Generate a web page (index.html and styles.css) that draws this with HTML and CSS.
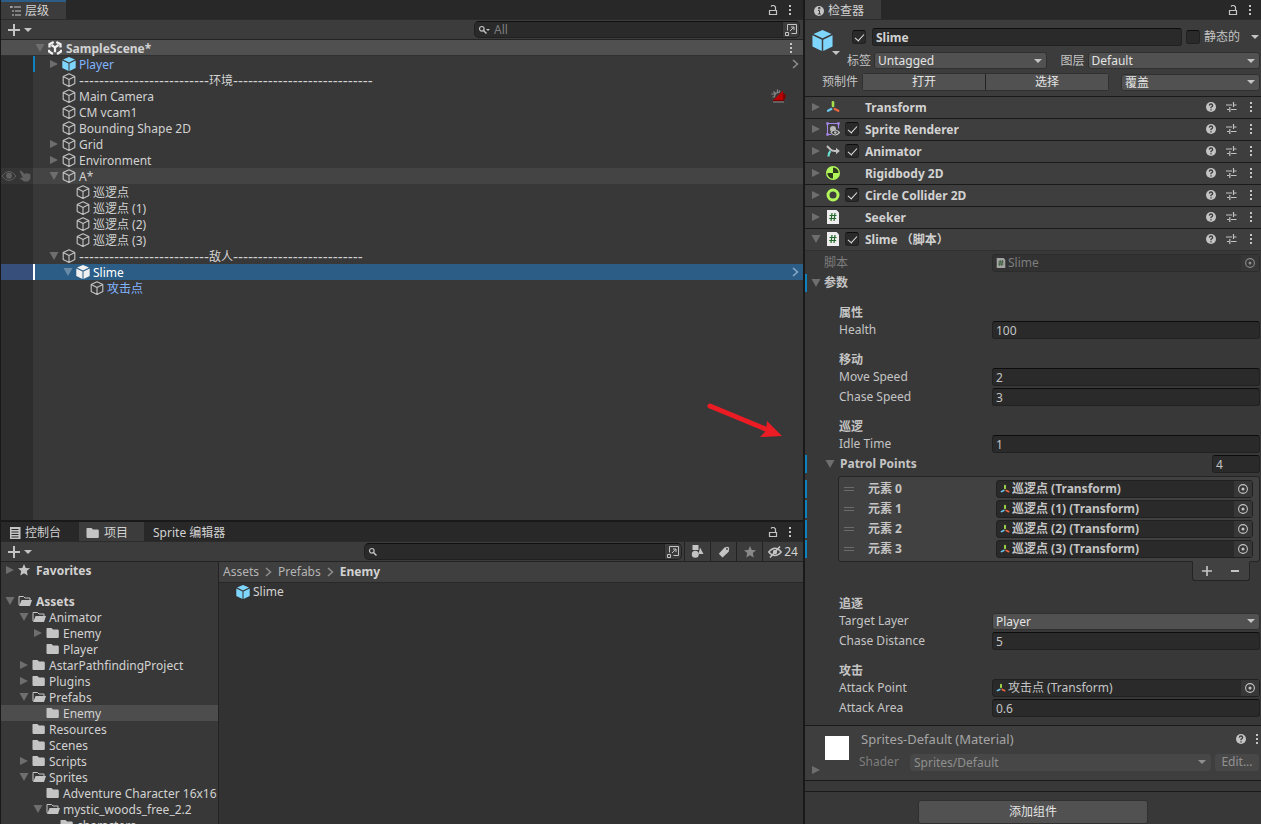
FILE: index.html
```html
<!DOCTYPE html>
<html lang="zh-CN">
<head>
<meta charset="utf-8">
<title>Unity Editor</title>
<link rel="stylesheet" href="styles.css">
</head>
<body>
<svg class="sprite" aria-hidden="true">
  <symbol id="right" viewBox="0 0 10 10"><path d="M1 1v8l8-4z" fill="currentColor"/></symbol>
  <symbol id="down" viewBox="0 0 10 10"><path d="M0.5 1h9l-4.500 8z" fill="currentColor"/></symbol>
  <symbol id="caret" viewBox="0 0 8 4"><path d="M0 0h8L4 4z" fill="currentColor"/></symbol>
  <symbol id="chevron" viewBox="0 0 7 10"><path d="M1 1l4.500 4L1 9" fill="none" stroke="currentColor" stroke-width="1.500"/></symbol>
  <symbol id="cube" viewBox="0 0 14 14"><path d="M7 .7l5.800 2.700v7L7 13.400 1.200 10.400v-7zM1.200 3.400L7 6.400l5.800-3M7 6.400v7" fill="none" stroke="currentColor" stroke-width="1.100" stroke-linejoin="round"/></symbol>
  <symbol id="solid" viewBox="0 0 14 14"><path d="M7 0l6 2.600-6 2.900-6-2.900zM.3 3.500l6.200 3V14L.3 11zM13.700 3.500l-6.200 3V14l6.200-3z" fill="currentColor"/></symbol>
  <symbol id="unity" viewBox="0 0 14 14"><path d="M5.700 1L1.500 3.200v3.300M8.300 1l4.200 2.200v3.300M1 8.800v1.700L5 13M13 8.800v1.700L9 13M3.500 4L7 6.400 10.500 4M7 6.400v4.800" fill="none" stroke="currentColor" stroke-width="2.300"/></symbol>
  <symbol id="dots" viewBox="0 0 4 12"><path d="M1 1h2v2H1zM1 5h2v2H1zM1 9h2v2H1z" fill="currentColor"/></symbol>
  <symbol id="lock" viewBox="0 0 10 12"><path d="M1.500 6.500h7v4h-7zM3 2.500l1-1h2l1.500 1.500v3" fill="none" stroke="currentColor" stroke-width="1.200"/></symbol>
  <symbol id="plus" viewBox="0 0 12 12"><path d="M6 0v12M0 6h12" stroke="currentColor" stroke-width="2"/></symbol>
  <symbol id="minus" viewBox="0 0 10 10"><path d="M1 5h8" stroke="currentColor" stroke-width="2"/></symbol>
  <symbol id="search" viewBox="0 0 10 10"><circle cx="3.800" cy="3.800" r="2.300" fill="none" stroke="currentColor" stroke-width="1.200"/><path d="M5.500 5.500l3 3" stroke="currentColor" stroke-width="1.500"/></symbol>
  <symbol id="popout" viewBox="0 0 12 12"><path d="M2.500 6.500v-6h9v9h-5M.5 8.500h3v3h-3zM5 7l4-4M6 3h3v3" fill="none" stroke="currentColor"/></symbol>
  <symbol id="list" viewBox="0 0 11 10"><path d="M1 0v2M0 1h3M4 1h7M2 5h2M5 5h6M2 9h2M5 9h6" stroke="currentColor"/></symbol>
  <symbol id="console" viewBox="0 0 11 12"><path d="M0 0h10.500v12H0z" fill="currentColor"/><path d="M1.500 2.500h7M1.500 5h7M1.500 7.500h7M1.500 10h7" stroke="#282828"/></symbol>
  <symbol id="folder" viewBox="0 0 14 12"><path d="M1 1h4.500l1.500 1.500h5l.8 1v6.800l-.8.700H1.200l-.7-.7V1.500z" fill="currentColor"/></symbol>
  <symbol id="folder-open" viewBox="0 0 14 12"><path d="M1 10V1.500h4.500L7 3h5v2" fill="none" stroke="currentColor"/><path d="M3.600 5H14l-2 6H1z" fill="currentColor"/></symbol>
  <symbol id="star" viewBox="0 0 12 12"><path d="M6 0l1.700 3.900 4.300.4-3.200 2.800.9 4.400L6 9.200l-3.700 2.300.9-4.400L0 4.300l4.300-.4z" fill="currentColor"/></symbol>
  <symbol id="eye" viewBox="0 0 14 10"><path d="M0 5Q7-4 14 5Q7 14 0 5z" fill="none" stroke="currentColor"/><circle cx="7" cy="4.800" r="3" fill="currentColor"/></symbol>
  <symbol id="eye-off" viewBox="0 0 14 12"><path d="M.7 6Q7-1.500 13.300 6Q7 13 .7 6z" fill="none" stroke="currentColor" stroke-width="1.300"/><circle cx="7" cy="6" r="2.200" fill="currentColor"/><path d="M2 11.500L12 .5" stroke="currentColor" stroke-width="1.600"/></symbol>
  <symbol id="hand" viewBox="0 0 12 12"><path d="M.5 1l1.500-.5L5.500 4l2-1 1 .7 1-.5 1 .8.800-.2V9L9 11.500H5L1 8.500l.5-1 2.500.5z" fill="currentColor"/></symbol>
  <symbol id="camera" viewBox="0 0 15 14"><path d="M.5 5h3M2.500 2.500l2 2M6.500 .5v3M1.500 8h2M9 1.500L8 3.500M3.500 8Q3.500 3.500 8 3.500" fill="none" stroke="#8a8a8a" stroke-width="1.200"/><path d="M2.500 11L12 1.500V11z" fill="#b80000"/><path d="M12 4l2.500 1.500v4L12 11z" fill="#800000"/><path d="M2 11.500h11" stroke="#700"/><path d="M2 13h11" stroke="#8a8a8a"/></symbol>
  <symbol id="info" viewBox="0 0 10 10"><circle cx="5" cy="5" r="5" fill="currentColor"/><path d="M4 4.500h1.500V8M3.800 8h3M4.500 1.500h1.500v1.300H4.500z" fill="none" stroke="#3c3c3c"/></symbol>
  <symbol id="help" viewBox="0 0 10 10"><circle cx="5" cy="5" r="5" fill="currentColor"/><path d="M3.300 3.600Q3.500 2 5 2T6.700 3.600Q6.700 4.600 5 5.300V6.300M5 7.200v1.300" fill="none" stroke="#3c3c3c" stroke-width="1.300"/></symbol>
  <symbol id="sliders" viewBox="0 0 11 10"><path d="M0 3h6M8 3h2.500M7.500 0v5M1 7.500h2M5 7.500h5.500M3.800 5v5" fill="none" stroke="currentColor" stroke-width="1.200"/></symbol>
  <symbol id="axes" viewBox="0 0 14 12"><path d="M7 5V1.200" stroke="#a5e04a" stroke-width="2.600" stroke-linecap="round"/><path d="M5.300 8L2 9.700" stroke="#6cc7ee" stroke-width="2.300" stroke-linecap="round"/><path d="M8.700 8l3.600 1.800" stroke="#ef6540" stroke-width="2.300" stroke-linecap="round"/></symbol>
  <symbol id="sprite-r" viewBox="0 0 14 14"><path d="M2 1.500h10.500v5M1.500 2v10.500h4" fill="none" stroke="#a486e8" stroke-width="1.100"/><path d="M.3.300h2.400v2.400H.3zM11.300.300h2.400v2.400h-2.400zM.3 11.300h2.400v2.400H.3z" fill="#a486e8"/><circle cx="7" cy="7" r="3" fill="#b8b8b8"/><path d="M5 10.500q4-5 8.500 0q-4.500 5-8.500 0z" fill="#383838" stroke="#c4c4c4" stroke-width="1.200"/><circle cx="9.300" cy="10.500" r="1.300" fill="#c4c4c4"/></symbol>
  <symbol id="animator" viewBox="0 0 14 12"><path d="M1 1l3.500 3.500Q6 6 9 6h3" fill="none" stroke="#c4c4c4" stroke-width="1.800"/><path d="M10 2.800L13.800 6 10 9.200z" fill="#c4c4c4"/><path d="M4.500 6q-2 2-2 5.500" fill="none" stroke="#6ee0d2" stroke-width="2.200"/></symbol>
  <symbol id="rigid" viewBox="0 0 14 14"><circle cx="7" cy="7" r="6.300" fill="#2d3a1c" stroke="#b0f55a" stroke-width="1.400"/><path d="M7 7V.7A6.300 6.300 0 0 0 .7 7zM7 7v6.300A6.300 6.300 0 0 0 13.300 7z" fill="#b0f55a"/></symbol>
  <symbol id="collider" viewBox="0 0 14 14"><circle cx="7" cy="7" r="5" fill="none" stroke="#b0f55a" stroke-width="3"/></symbol>
  <symbol id="script" viewBox="0 0 14 14"><path d="M1 0h9.500L13 2.500V14H1z" fill="#eee"/><path d="M6 3L5 11M9 3L8 11M3.500 5.500h7M3.200 8.500h7" stroke="#27692c" stroke-width="1.200"/></symbol>
  <symbol id="target" viewBox="0 0 10 10"><circle cx="5" cy="5" r="4.400" fill="none" stroke="currentColor" stroke-width="1.100"/><circle cx="5" cy="5" r="1.500" fill="currentColor"/></symbol>
  <symbol id="shapes" viewBox="0 0 12 13"><path d="M1 0h6v5H1zM8.500 2.500L12 9H7z" fill="currentColor"/><circle cx="3.800" cy="9.200" r="3.500" fill="currentColor"/></symbol>
  <symbol id="tag" viewBox="0 0 12 12"><path d="M6.500 1.500L10 .8l1.200 1.200-.5 3.800L4.500 11.500.8 7.800z" fill="currentColor"/><circle cx="9" cy="3" r=".9" fill="#3c3c3c"/></symbol>
</svg>

<main class="editor">
  <div class="left">
    <section class="panel hierarchy">
      <header class="tabs">
        <button class="tab active focus"><svg class="i11"><use href="#list"/></svg>层级</button>
        <span class="tab-actions"><button aria-label="锁定"><svg class="lock"><use href="#lock"/></svg></button><button aria-label="菜单"><svg class="dots"><use href="#dots"/></svg></button></span>
      </header>
      <div class="toolbar">
        <button class="add" aria-label="创建"><svg class="i12"><use href="#plus"/></svg><svg class="caret"><use href="#caret"/></svg></button>
        <div class="search scene-search"><svg class="i10"><use href="#search"/></svg><svg class="tiny"><use href="#caret"/></svg><input type="text" placeholder="All" aria-label="搜索层级"><button aria-label="打开搜索"><svg class="i12"><use href="#popout"/></svg></button></div>
      </div>
      <div class="scene">
        <svg class="fold"><use href="#down"/></svg><svg class="i14 white"><use href="#unity"/></svg><b>SampleScene*</b><button class="push" aria-label="场景菜单"><svg class="dots"><use href="#dots"/></svg></button>
      </div>
      <ul class="nodes">
        <li class="node changed"><span class="gutter"></span><div class="item d1"><svg class="fold"><use href="#right"/></svg><svg class="i14 blue"><use href="#solid"/></svg><span class="link">Player</span><svg class="open"><use href="#chevron"/></svg></div></li>
        <li class="node"><span class="gutter"></span><div class="item d1"><i class="fold"></i><svg class="i14"><use href="#cube"/></svg><span class="divider"><span class="dash">--------------------------</span>环境<span class="dash">----------------------------</span></span></div></li>
        <li class="node"><span class="gutter"></span><div class="item d1"><i class="fold"></i><svg class="i14"><use href="#cube"/></svg><span>Main Camera</span><svg class="camera"><use href="#camera"/></svg></div></li>
        <li class="node"><span class="gutter"></span><div class="item d1"><i class="fold"></i><svg class="i14"><use href="#cube"/></svg><span>CM vcam1</span></div></li>
        <li class="node"><span class="gutter"></span><div class="item d1"><i class="fold"></i><svg class="i14"><use href="#cube"/></svg><span>Bounding Shape 2D</span></div></li>
        <li class="node"><span class="gutter"></span><div class="item d1"><svg class="fold"><use href="#right"/></svg><svg class="i14"><use href="#cube"/></svg><span>Grid</span></div></li>
        <li class="node"><span class="gutter"></span><div class="item d1"><svg class="fold"><use href="#right"/></svg><svg class="i14"><use href="#cube"/></svg><span>Environment</span></div></li>
        <li class="node hover"><span class="gutter"><svg class="eye"><use href="#eye"/></svg><svg class="i12"><use href="#hand"/></svg></span><div class="item d1"><svg class="fold"><use href="#down"/></svg><svg class="i14"><use href="#cube"/></svg><span>A*</span></div></li>
        <li class="node"><span class="gutter"></span><div class="item d2"><i class="fold"></i><svg class="i14"><use href="#cube"/></svg><span>巡逻点</span></div></li>
        <li class="node"><span class="gutter"></span><div class="item d2"><i class="fold"></i><svg class="i14"><use href="#cube"/></svg><span>巡逻点 (1)</span></div></li>
        <li class="node"><span class="gutter"></span><div class="item d2"><i class="fold"></i><svg class="i14"><use href="#cube"/></svg><span>巡逻点 (2)</span></div></li>
        <li class="node"><span class="gutter"></span><div class="item d2"><i class="fold"></i><svg class="i14"><use href="#cube"/></svg><span>巡逻点 (3)</span></div></li>
        <li class="node"><span class="gutter"></span><div class="item d1"><svg class="fold"><use href="#down"/></svg><svg class="i14"><use href="#cube"/></svg><span class="divider"><span class="dash">--------------------------</span>敌人<span class="dash">--------------------------</span></span></div></li>
        <li class="node selected"><span class="gutter"></span><div class="item d2"><svg class="fold"><use href="#down"/></svg><svg class="i14 white"><use href="#solid"/></svg><span>Slime</span><svg class="open"><use href="#chevron"/></svg></div></li>
        <li class="node"><span class="gutter"></span><div class="item d3"><i class="fold"></i><svg class="i14"><use href="#cube"/></svg><span class="link">攻击点</span></div></li>
        <li class="node rest"><span class="gutter"></span></li>
      </ul>
    </section>

    <section class="panel project">
      <header class="tabs">
        <button class="tab console-tab"><svg class="console"><use href="#console"/></svg>控制台</button>
        <button class="tab active folder-tab"><svg class="folder"><use href="#folder"/></svg>项目</button>
        <button class="tab">Sprite 编辑器</button>
        <span class="tab-actions"><button aria-label="锁定"><svg class="lock"><use href="#lock"/></svg></button><button aria-label="菜单"><svg class="dots"><use href="#dots"/></svg></button></span>
      </header>
      <div class="toolbar">
        <button class="add" aria-label="创建"><svg class="i12"><use href="#plus"/></svg><svg class="caret"><use href="#caret"/></svg></button>
        <div class="search asset-search"><svg class="i10"><use href="#search"/></svg><input type="text" aria-label="搜索资源"><button aria-label="打开搜索"><svg class="i12"><use href="#popout"/></svg></button></div>
        <button class="tool" aria-label="按类型"><svg class="i13"><use href="#shapes"/></svg></button>
        <button class="tool" aria-label="按标签"><svg class="i12"><use href="#tag"/></svg></button>
        <button class="tool dim" aria-label="收藏"><svg class="i12"><use href="#star"/></svg></button>
        <button class="tool wide"><svg class="eye-off"><use href="#eye-off"/></svg>24</button>
      </div>
      <div class="browser">
        <ul class="tree">
          <li class="t0 favorites"><svg class="fold"><use href="#right"/></svg><svg class="star"><use href="#star"/></svg><b>Favorites</b></li>
          <li class="t0"><svg class="fold"><use href="#down"/></svg><svg class="folder"><use href="#folder-open"/></svg><b>Assets</b></li>
          <li class="t1"><svg class="fold"><use href="#down"/></svg><svg class="folder"><use href="#folder-open"/></svg>Animator</li>
          <li class="t2"><svg class="fold"><use href="#right"/></svg><svg class="folder"><use href="#folder"/></svg>Enemy</li>
          <li class="t2"><i class="fold"></i><svg class="folder"><use href="#folder"/></svg>Player</li>
          <li class="t1"><svg class="fold"><use href="#right"/></svg><svg class="folder"><use href="#folder"/></svg>AstarPathfindingProject</li>
          <li class="t1"><svg class="fold"><use href="#right"/></svg><svg class="folder"><use href="#folder"/></svg>Plugins</li>
          <li class="t1"><svg class="fold"><use href="#down"/></svg><svg class="folder"><use href="#folder-open"/></svg>Prefabs</li>
          <li class="t2 current"><i class="fold"></i><svg class="folder"><use href="#folder"/></svg>Enemy</li>
          <li class="t1"><i class="fold"></i><svg class="folder"><use href="#folder"/></svg>Resources</li>
          <li class="t1"><i class="fold"></i><svg class="folder"><use href="#folder"/></svg>Scenes</li>
          <li class="t1"><svg class="fold"><use href="#right"/></svg><svg class="folder"><use href="#folder"/></svg>Scripts</li>
          <li class="t1"><svg class="fold"><use href="#down"/></svg><svg class="folder"><use href="#folder-open"/></svg>Sprites</li>
          <li class="t2"><i class="fold"></i><svg class="folder"><use href="#folder"/></svg>Adventure Character 16x16</li>
          <li class="t2"><svg class="fold"><use href="#down"/></svg><svg class="folder"><use href="#folder-open"/></svg>mystic_woods_free_2.2</li>
          <li class="t3"><i class="fold"></i><svg class="folder"><use href="#folder"/></svg>characters</li>
        </ul>
        <div class="assets">
          <nav class="crumbs"><a href="#">Assets</a><svg class="sep"><use href="#chevron"/></svg><a href="#">Prefabs</a><svg class="sep"><use href="#chevron"/></svg><b>Enemy</b></nav>
          <div class="asset"><svg class="i14 blue"><use href="#solid"/></svg>Slime</div>
        </div>
      </div>
    </section>
    <svg class="pointer" viewBox="0 0 78 38" aria-hidden="true"><path d="M4 4L62 28" stroke="#ec1c24" stroke-width="5" stroke-linecap="round"/><path d="M61 19l15 15-22 1 6-6z" fill="#ec1c24"/></svg>
  </div>

  <section class="panel inspector">
    <header class="tabs">
      <button class="tab active info-tab"><svg class="i10"><use href="#info"/></svg>检查器</button>
      <span class="tab-actions"><button aria-label="锁定"><svg class="lock"><use href="#lock"/></svg></button><button aria-label="菜单"><svg class="dots"><use href="#dots"/></svg></button></span>
    </header>
    <div class="object">
      <button class="object-icon" aria-label="图标"><svg class="big blue"><use href="#solid"/></svg><svg class="caret"><use href="#caret"/></svg></button>
      <div class="line name-line">
        <input type="checkbox" checked aria-label="启用"><input class="field name" type="text" value="Slime" aria-label="名称">
        <input type="checkbox" id="static"><label for="static">静态的</label><button class="static-menu" aria-label="静态选项"><svg class="caret"><use href="#caret"/></svg></button>
      </div>
      <div class="line tag-line">
        <label for="tag-select">标签</label><span class="select"><select id="tag-select"><option>Untagged</option></select><svg class="caret"><use href="#caret"/></svg></span>
        <label class="layer-label" for="layer-select">图层</label><span class="select"><select id="layer-select"><option>Default</option></select><svg class="caret"><use href="#caret"/></svg></span>
      </div>
      <div class="line prefab-line">
        <span class="prefab-label">预制件</span><span class="pair"><button>打开</button><button>选择</button></span><span class="select override"><select aria-label="覆盖"><option>覆盖</option></select><svg class="caret"><use href="#caret"/></svg></span>
      </div>
    </div>

    <div class="component"><svg class="fold"><use href="#right"/></svg><svg class="i14"><use href="#axes"/></svg><i class="nocheck"></i><b>Transform</b><span class="tools"><svg class="i10"><use href="#help"/></svg><svg class="sliders"><use href="#sliders"/></svg><svg class="dots"><use href="#dots"/></svg></span></div>
    <div class="component"><svg class="fold"><use href="#right"/></svg><svg class="i14"><use href="#sprite-r"/></svg><input type="checkbox" checked id="c1"><label for="c1">Sprite Renderer</label><span class="tools"><svg class="i10"><use href="#help"/></svg><svg class="sliders"><use href="#sliders"/></svg><svg class="dots"><use href="#dots"/></svg></span></div>
    <div class="component"><svg class="fold"><use href="#right"/></svg><svg class="i14"><use href="#animator"/></svg><input type="checkbox" checked id="c2"><label for="c2">Animator</label><span class="tools"><svg class="i10"><use href="#help"/></svg><svg class="sliders"><use href="#sliders"/></svg><svg class="dots"><use href="#dots"/></svg></span></div>
    <div class="component"><svg class="fold"><use href="#right"/></svg><svg class="i14"><use href="#rigid"/></svg><i class="nocheck"></i><b>Rigidbody 2D</b><span class="tools"><svg class="i10"><use href="#help"/></svg><svg class="sliders"><use href="#sliders"/></svg><svg class="dots"><use href="#dots"/></svg></span></div>
    <div class="component"><svg class="fold"><use href="#right"/></svg><svg class="i14"><use href="#collider"/></svg><input type="checkbox" checked id="c3"><label for="c3">Circle Collider 2D</label><span class="tools"><svg class="i10"><use href="#help"/></svg><svg class="sliders"><use href="#sliders"/></svg><svg class="dots"><use href="#dots"/></svg></span></div>
    <div class="component"><svg class="fold"><use href="#right"/></svg><svg class="i14"><use href="#script"/></svg><i class="nocheck"></i><b>Seeker</b><span class="tools"><svg class="i10"><use href="#help"/></svg><svg class="sliders"><use href="#sliders"/></svg><svg class="dots"><use href="#dots"/></svg></span></div>
    <div class="component expanded"><svg class="fold"><use href="#down"/></svg><svg class="i14"><use href="#script"/></svg><input type="checkbox" checked id="c4"><label for="c4">Slime （脚本）</label><span class="tools"><svg class="i10"><use href="#help"/></svg><svg class="sliders"><use href="#sliders"/></svg><svg class="dots"><use href="#dots"/></svg></span></div>

    <div class="body">
      <div class="prop root disabled"><label for="p-script">脚本</label><span class="object-field"><svg class="i10"><use href="#script"/></svg><input id="p-script" type="text" value="Slime" disabled><button disabled aria-label="选择脚本"><svg class="i10"><use href="#target"/></svg></button></span></div>
      <div class="prop group modified"><svg class="fold"><use href="#down"/></svg><b>参数</b></div>
      <h3>属性</h3>
      <div class="prop"><label for="p1">Health</label><input class="field" id="p1" type="text" value="100"></div>
      <h3>移动</h3>
      <div class="prop"><label for="p2">Move Speed</label><input class="field" id="p2" type="text" value="2"></div>
      <div class="prop"><label for="p3">Chase Speed</label><input class="field" id="p3" type="text" value="3"></div>
      <h3>巡逻</h3>
      <div class="prop"><label for="p4">Idle Time</label><input class="field" id="p4" type="text" value="1"></div>
      <div class="prop array modified"><svg class="fold"><use href="#down"/></svg><label for="p5">Patrol Points</label><input class="field count" id="p5" type="text" value="4"></div>
      <div class="array-list">
        <div class="element modified"><i class="grip"></i><label for="e0">元素 0</label><span class="object-field"><svg class="axes"><use href="#axes"/></svg><input id="e0" type="text" readonly value="巡逻点 (Transform)"><button aria-label="选择对象"><svg class="i10"><use href="#target"/></svg></button></span></div>
        <div class="element modified"><i class="grip"></i><label for="e1">元素 1</label><span class="object-field"><svg class="axes"><use href="#axes"/></svg><input id="e1" type="text" readonly value="巡逻点 (1) (Transform)"><button aria-label="选择对象"><svg class="i10"><use href="#target"/></svg></button></span></div>
        <div class="element modified"><i class="grip"></i><label for="e2">元素 2</label><span class="object-field"><svg class="axes"><use href="#axes"/></svg><input id="e2" type="text" readonly value="巡逻点 (2) (Transform)"><button aria-label="选择对象"><svg class="i10"><use href="#target"/></svg></button></span></div>
        <div class="element modified"><i class="grip"></i><label for="e3">元素 3</label><span class="object-field"><svg class="axes"><use href="#axes"/></svg><input id="e3" type="text" readonly value="巡逻点 (3) (Transform)"><button aria-label="选择对象"><svg class="i10"><use href="#target"/></svg></button></span></div>
      </div>
      <div class="array-foot"><button aria-label="添加"><svg class="i10"><use href="#plus"/></svg></button><button aria-label="移除"><svg class="i10"><use href="#minus"/></svg></button></div>
      <h3>追逐</h3>
      <div class="prop"><label for="p6">Target Layer</label><span class="select"><select id="p6"><option>Player</option></select><svg class="caret"><use href="#caret"/></svg></span></div>
      <div class="prop"><label for="p7">Chase Distance</label><input class="field" id="p7" type="text" value="5"></div>
      <h3>攻击</h3>
      <div class="prop"><label for="p8">Attack Point</label><span class="object-field"><svg class="axes"><use href="#axes"/></svg><input id="p8" type="text" readonly value="攻击点 (Transform)"><button aria-label="选择对象"><svg class="i10"><use href="#target"/></svg></button></span></div>
      <div class="prop"><label for="p9">Attack Area</label><input class="field" id="p9" type="text" value="0.6"></div>
    </div>

    <div class="material">
      <svg class="fold"><use href="#right"/></svg>
      <span class="swatch"></span>
      <div class="material-info">
        <div class="material-title"><span>Sprites-Default (Material)</span><svg class="i10"><use href="#help"/></svg><svg class="dots"><use href="#dots"/></svg></div>
        <div class="shader"><label for="shader">Shader</label><span class="select"><select id="shader" disabled><option>Sprites/Default</option></select><svg class="caret"><use href="#caret"/></svg></span><button disabled>Edit...</button></div>
      </div>
    </div>
    <div class="gap"></div>
    <div class="add-component"><button>添加组件</button></div>
  </section>
</main>
</body>
</html>
```

FILE: styles.css
```css
* { box-sizing: border-box; }

body {
  margin: 0;
  background: #191919;
  color: #d2d2d2;
  font: 12px/16px "Noto Sans", "Noto Sans CJK SC", sans-serif;
}

button, input, select { margin: 0; padding: 0; border: 0; background: none; color: inherit; font: inherit; min-width: 0; outline: 0; }
button { display: flex; align-items: center; justify-content: center; }
select { appearance: none; }
ul { margin: 0; padding: 0; list-style: none; }
a { color: inherit; text-decoration: none; }
svg { display: block; flex: none; color: #c4c4c4; overflow: visible; }
b { font-weight: 700; }

.sprite { position: absolute; width: 0; height: 0; }
.i10 { width: 10px; height: 10px; }
.i11 { width: 11px; height: 10px; }
.i12 { width: 12px; height: 12px; }
.i13 { width: 13px; height: 13px; }
.i14 { width: 14px; height: 14px; }
.big { width: 21px; height: 21px; }
.blue { color: #7fd6fd; }
.white { color: #f0f0f0; }
.lock { width: 10px; height: 12px; }
.dots { width: 4px; height: 12px; }
.caret { width: 8px; height: 4px; }
.fold { width: 10px; height: 10px; flex: none; color: #6e6e6e; }
.folder { width: 14px; height: 12px; }
.star { width: 12px; height: 12px; margin-right: 2px; }
.axes { width: 10px; height: 10px; }
.sliders { width: 11px; height: 10px; }
.console { width: 11px; height: 12px; }
.eye { width: 14px; height: 10px; }
.eye-off { width: 14px; height: 12px; }

.editor {
  display: grid;
  grid-template-columns: minmax(0, 804fr) minmax(0, 457fr);
  height: 100vh;
  overflow: hidden;
}

.left {
  position: relative;
  display: grid;
  grid-template-rows: minmax(0, 520fr) minmax(0, 302fr);
  gap: 2px;
  min-height: 0;
  padding: 0 1px;
}

.panel { display: flex; flex-direction: column; min-width: 0; min-height: 0; background: #383838; overflow: hidden; }

/* Tabs and toolbars */
.tabs { display: flex; flex: none; height: 19px; background: #282828; }
.tab { gap: 4px; padding: 2px 17px 0 9px; }
.tab.active { background: #3c3c3c; }
.tab.focus { border-top: 2px solid #2c5d87; padding-top: 0; }
.tab.console-tab { padding-right: 18px; }
.tab.folder-tab { padding-right: 16px; padding-left: 7px; }
.tab.info-tab { padding-right: 17px; }
.tab-actions { display: flex; gap: 10px; align-items: center; margin-left: auto; padding-right: 11px; }
.inspector .tab-actions { padding-right: 9px; }
.toolbar { display: flex; flex: none; align-items: center; height: 21px; border-top: 1px solid #2b2b2b; border-bottom: 1px solid #232323; background: #3c3c3c; }
.add { gap: 4px; padding-left: 7px; }
.search { display: flex; align-items: center; height: 17px; padding-left: 3px; border: 1px solid #202020; border-top-color: #101010; border-radius: 5px; background: #2a2a2a; }
.search input { flex: 1; height: 15px; padding-left: 5px; }
.search input::placeholder { color: #7d7d7d; opacity: 1; }
.search button { width: 17px; height: 15px; border-left: 1px solid #242424; border-radius: 0 4px 4px 0; background: #3c3c3c; }
.scene-search { flex: none; width: 326px; margin-left: auto; margin-right: 3px; }
.scene-search input { padding-left: 4px; }
.asset-search { flex: none; width: 318px; margin-left: auto; margin-right: 2px; }
.tiny { width: 4px; height: 2px; margin-left: -2px; }
.tool { gap: 2px; width: 26px; height: 19px; border-left: 1px solid #232323; }
.tool.dim svg { color: #8a8a8a; }
.tool.wide { width: 41px; }

/* Hierarchy */
.scene { display: flex; flex: none; align-items: center; gap: 3px; height: 16px; padding: 0 10px 0 34px; border-bottom: 1px solid #303030; background: #505050; }
.scene b { padding-top: 2px; padding-left: 1px; }
.push { margin-left: auto; }
.nodes { display: flex; flex: 1; flex-direction: column; min-height: 0; }
.node { display: flex; flex: none; height: 16px; }
.node.rest { flex: 1; }
.gutter { display: flex; flex: none; align-items: center; justify-content: space-between; width: 32px; padding: 0 2px 0 1px; background: #2d2d2d; }
.gutter svg { color: #606060; }
.item { display: flex; flex: 1; align-items: center; gap: 3px; min-width: 0; white-space: nowrap; border-left: 2px solid transparent; background-clip: padding-box; }
.item > span { padding-top: 2px; }
.d1 { padding-left: 14px; }
.d2 { padding-left: 28px; }
.d3 { padding-left: 42px; }
.changed .item { border-left-color: #0f81be; }
.hover .gutter { background: #353535; }
.hover { background: #444; }
.selected { background: #2c5d87; color: #fff; }
.selected .gutter { background: #364f7b; }
.selected .item { border-left-color: #fff; }
.selected .fold { color: #698ba8; }
.link { color: #81b4ff; }
.divider { display: flex; }
.dash { font-family: "Liberation Sans", sans-serif; font-size: 15px; }
.open { width: 7px; height: 10px; margin-left: auto; margin-right: 4px; color: #8f8f8f; }
.selected .open { color: #8bacc9; }
.camera { width: 15px; height: 14px; margin-left: auto; margin-right: 17px; }

.pointer { position: absolute; left: 706px; top: 402px; width: 78px; height: 38px; }

/* Project browser */
.browser { display: grid; flex: 1; grid-template-columns: 218px minmax(0, 1fr); min-height: 0; }
.tree { min-height: 0; overflow: hidden; border-right: 1px solid #232323; }
.tree li { display: flex; align-items: center; gap: 3px; height: 16px; padding-top: 2px; white-space: nowrap; }
.tree svg { margin-bottom: 2px; }
.tree .favorites { margin-bottom: 15px; }
.tree b { padding-left: 1px; }
.t0 { padding-left: 4px; }
.t1 { padding-left: 18px; }
.t2 { padding-left: 32px; }
.t3 { padding-left: 46px; }
.tree .current { background: #4d4d4d; }
.assets { background: #323232; }
.crumbs { display: flex; align-items: center; gap: 6px; height: 21px; padding-left: 4px; border-bottom: 1px solid #282828; background: #3f3f3f; color: #b4b4b4; }
.crumbs b { color: #d2d2d2; }
.sep { width: 7px; height: 10px; color: #8f8f8f; }
.asset { display: flex; align-items: center; gap: 3px; height: 17px; padding-left: 17px; }

/* Shared form controls */
.field { height: 18px; padding: 0 3px; border: 1px solid #212121; border-top-color: #0d0d0d; border-radius: 3px; background: #2a2a2a; }
input[type="checkbox"] { appearance: none; flex: none; display: grid; place-items: center; width: 14px; height: 14px; border: 1px solid #212121; border-top-color: #0d0d0d; border-radius: 3px; background: #2a2a2a; }
input[type="checkbox"]:checked::before { content: ""; width: 4px; height: 8px; margin-bottom: 2px; border: solid #e4e4e4; border-width: 0 1px 1px 0; transform: rotate(42deg); }
.select { display: grid; flex: 1; align-items: center; min-width: 0; height: 17px; border: 1px solid #303030; border-radius: 3px; background: #515151; color: #e4e4e4; }
.select select { grid-area: 1 / 1; width: 100%; height: 15px; padding-left: 3px; line-height: 15px; }
.select .caret { grid-area: 1 / 1; justify-self: end; margin-right: 4px; pointer-events: none; }
.object-field { display: flex; flex: 1; align-items: center; min-width: 0; height: 18px; padding-left: 3px; border: 1px solid #202020; border-radius: 3px; background: #2a2a2a; }
.object-field input { flex: 1; padding-left: 2px; height: 16px; }
.object-field button { width: 18px; height: 16px; background: #373737; }

/* Inspector header */
.inspector { border-left: 1px solid #191919; }
.object { display: grid; flex: none; grid-template-columns: 46px minmax(0, 1fr); align-content: start; height: 78px; padding: 8px 1px 0 7px; border-top: 1px solid #2b2b2b; border-bottom: 1px solid #1a1a1a; background: #3c3c3c; color: #c4c4c4; }
.object-icon { flex-direction: column; align-items: flex-start; justify-content: flex-start; grid-area: 1 / 1; height: 18px; padding-top: 2px; }
.object-icon .caret { margin-left: 20px; }
.line { display: flex; align-items: center; }
.name-line { grid-area: 1 / 2; height: 18px; padding-right: 1px; margin-left: -6px; }
.name { flex: 1; margin-left: 6px; margin-right: 4px; color: #d2d2d2; font-weight: 700; }
.name-line label { margin-left: 4px; }
.static-menu { margin-left: 11px; }
.tag-line { grid-column: 1 / -1; height: 27px; padding-top: 2px; padding-left: 35px; gap: 3px; }
.layer-label { margin-left: 11px; }
.prefab-line { grid-column: 1 / -1; height: 18px; padding-left: 10px; }
.pair { display: flex; flex: 247; gap: 1px; margin-left: 4px; margin-right: 12px; border: 1px solid #303030; border-radius: 3px; background: #232323; }
.pair button { flex: 1; height: 16px; background: #515151; color: #e4e4e4; }
.override { flex: 138; }

.component { display: flex; flex: none; align-items: center; height: 22px; padding: 0 9px 1px 6px; border-bottom: 1px solid #1a1a1a; background: #3e3e3e; }
.component.expanded { border-bottom-color: #303030; }
.component .i14 { margin-left: 5px; margin-right: 5px; }
.component b, .component label { margin-left: 6px; padding-top: 1px; font-weight: 700; }
.nocheck { width: 14px; }
.tools { display: flex; gap: 10px; align-items: center; margin-left: auto; }
.tools .dots { margin-left: 2px; margin-right: -1px; }

/* Script properties */
.body { flex: none; padding: 2px 1px 7px 0; border-bottom: 1px solid #1a1a1a; color: #c4c4c4; }
.prop, .element { display: flex; align-items: center; height: 20px; }
.prop { padding-left: 34px; }
.prop > label { flex: none; width: 153px; }
.prop > .field { flex: 1; }
.prop.root { padding-left: 19px; }
.prop.root > label { width: 168px; }
.disabled { color: #7d7d7d; }
.disabled .object-field { border-color: #2c2c2c; background: #323232; }
.disabled svg { opacity: 0.6; }
.modified { position: relative; }
.modified::before { content: ""; position: absolute; left: 0; top: 1px; width: 2px; height: 18px; background: #0f81be; }
.prop.group { padding-left: 6px; gap: 3px; }
.prop.array { padding-left: 20px; gap: 5px; }
.prop.array > label { width: auto; font-weight: 700; }
.prop.array > .count { flex: none; width: 48px; margin-left: auto; }
h3 { height: 27px; margin: 0; padding: 12px 0 0 34px; font-size: 12px; line-height: 16px; }
.array-list { margin: 2px 0 0 33px; padding: 2px 6px 2px 5px; border: 1px solid #242424; border-radius: 3px; background: #414141; }
.element > label { flex: none; width: 128px; font-weight: 700; }
.element .object-field { font-weight: 700; }
.element.modified::before { left: -39px; }
.grip { width: 10px; height: 4px; margin-right: 14px; border: solid #6b6b6b; border-width: 1px 0; }
.array-foot { display: flex; width: 58px; height: 20px; margin: -1px 10px 3px auto; border: 1px solid #242424; border-top-color: #414141; border-radius: 0 0 3px 3px; background: #414141; }
.array-foot button { flex: 1; }

/* Material */
.material { display: flex; flex: none; height: 55px; padding-left: 6px; border-bottom: 1px solid #1a1a1a; background: #3e3e3e; color: #a5a5a5; }
.material > .fold { align-self: flex-end; margin-bottom: 5px; }
.swatch { flex: none; width: 24px; height: 24px; margin: 10px 0 0 4px; background: #fff; }
.material-info { flex: 1; min-width: 0; padding: 3px 2px 0 10px; }
.material-title { display: flex; align-items: center; height: 20px; padding-left: 2px; font-size: 13px; }
.material-title .i10 { margin-left: auto; margin-right: 9px; }
.shader { display: flex; align-items: center; height: 26px; color: #7d7d7d; }
.shader label { width: 51px; }
.shader .select { border-color: #474747; background: #474747; color: #8f8f8f; }
.shader .caret { color: #8f8f8f; }
.shader select:disabled { opacity: 1; color: inherit; }
.shader button { width: 44px; height: 17px; margin-left: 4px; border-radius: 3px; background: #484848; color: #929292; }
.gap { flex: none; height: 11px; border-bottom: 1px solid #1a1a1a; }
.add-component { display: flex; justify-content: center; padding-top: 8px; }
.add-component button { width: 230px; height: 24px; border: 1px solid #303030; border-radius: 3px; background: #515151; color: #e4e4e4; }
```
